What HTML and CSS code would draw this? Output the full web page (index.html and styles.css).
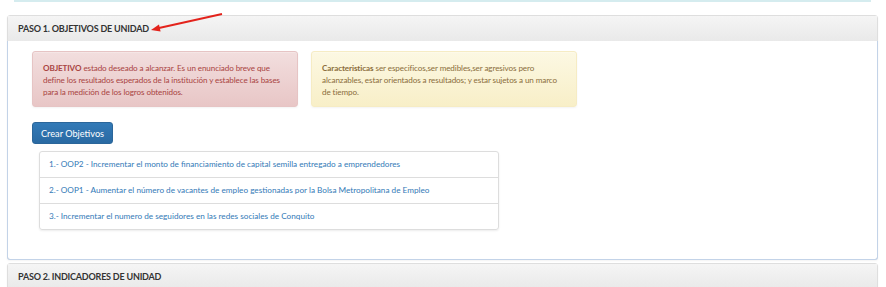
FILE: index.html
```html
<!DOCTYPE html>
<html lang="es">
<head>
  <meta charset="UTF-8">
  <title>Objetivos de unidad</title>
  <link rel="stylesheet" href="styles.css">
</head>
<body>
<div class="top-line"></div>

<div class="panel">
  <div class="panel-heading">PASO 1. OBJETIVOS DE UNIDAD</div>
  <div class="panel-body">
    <div class="alerts">
      <div class="alert alert-danger">
        <b>OBJETIVO</b> estado deseado a alcanzar. Es un enunciado breve que define los resultados esperados de la institución y establece las bases para la medición de los logros obtenidos.
      </div>
      <div class="alert alert-warning">
        <b>Caracteristicas</b> ser especificos,ser medibles,ser agresivos pero alcanzables, estar orientados a resultados; y estar sujetos a un marco de tiempo.
      </div>
    </div>

    <a href="#" class="btn">Crear Objetivos</a>

    <ul class="list-group">
      <li><a href="#">1.- OOP2 - Incrementar el monto de financiamiento de capital semilla entregado a emprendedores</a></li>
      <li><a href="#">2.- OOP1 - Aumentar el número de vacantes de empleo gestionadas por la Bolsa Metropolitana de Empleo</a></li>
      <li><a href="#">3.- Incrementar el numero de seguidores en las redes sociales de Conquito</a></li>
    </ul>
  </div>
</div>

<div class="panel panel-next">
  <div class="panel-heading">PASO 2. INDICADORES DE UNIDAD</div>
</div>

<!-- flecha roja encima del titulo -->
<svg class="arrow" width="80" height="24" viewBox="0 0 80 24">
  <line x1="74" y1="2" x2="11" y2="16" stroke="#e3231c" stroke-width="2"/>
  <polygon points="3,18 12.6,19.6 11,12.4" fill="#e3231c"/>
</svg>
</body>
</html>
```

FILE: styles.css
```css
body {
  margin: 0;
  padding: 0 8px 0 7px;
  font-family: Lato, "Open Sans", sans-serif;
  background-color: #fff;
  color: #333;
}
.top-line {
  margin: 0 7px 0 7px;
  height: 2px;
  background-color: #d5ecef;
}
.panel {
  margin-top: 13px;
  border: 1px solid #dedede;
  border-radius: 3px;
  box-shadow: 0 1px 2px rgba(0, 0, 0, 0.05);
}
.panel-next {
  margin-top: 3px;
}
.panel-heading {
  height: 25px;
  line-height: 26px;
  padding-left: 10px;
  font-size: 9px;
  letter-spacing: -0.2px;
  font-weight: bold;
  color: #333;
  background-image: linear-gradient(to bottom, #f5f5f5, #e9e9e9);
}
.panel-body {
  margin: 0 -1px -1px -1px;
  border: 1px solid #c3d3e8;
  border-top: none;
  border-radius: 0 0 3px 3px;
  padding: 10px 0 30px 24px;
}
.alerts {
  display: flex;
  gap: 13px;
}
.alert {
  box-sizing: border-box;
  width: 266px;
  height: 56px;
  padding: 10px 11px 10px 10px;
  font-size: 8.1px;
  letter-spacing: -0.1px;
  line-height: 12px;
  border: 1px solid;
  border-radius: 3px;
  box-shadow: inset 0 1px 0 rgba(255, 255, 255, 0.25), 0 1px 2px rgba(0, 0, 0, 0.05);
}
.alert-danger {
  color: #a94442;
  border-color: #e6c4c4;
  background-image: linear-gradient(to bottom, #f2dede, #e8c6c6);
}
.alert-warning {
  color: #8a6d3b;
  border-color: #f6ecc4;
  background-image: linear-gradient(to bottom, #fcf8e3, #f8efc8);
}
.btn {
  display: inline-block;
  margin-top: 15px;
  padding: 0 8px;
  height: 22px;
  line-height: 21px;
  font-size: 9.2px;
  white-space: nowrap;
  color: #fff;
  text-decoration: none;
  border: 1px solid #2b669a;
  border-radius: 3px;
  background-image: linear-gradient(to bottom, #337ab7, #2a6aa3);
  box-sizing: border-box;
  vertical-align: top;
}
.list-group {
  list-style: none;
  margin: 7px 0 0 7px;
  padding: 0;
  width: 460px;
  border-radius: 3px;
  box-shadow: 0 1px 2px rgba(0, 0, 0, 0.075);
}
.list-group li {
  height: 25px;
  line-height: 25px;
  padding-left: 9px;
  border: 1px solid #ddd;
  margin-bottom: -1px;
  font-size: 8.2px;
}
.list-group li:first-child {
  border-radius: 3px 3px 0 0;
}
.list-group li:last-child {
  border-radius: 0 0 3px 3px;
}
.list-group a {
  color: #337ab7;
  text-decoration: none;
}
.arrow {
  position: absolute;
  left: 148px;
  top: 12px;
}
```
